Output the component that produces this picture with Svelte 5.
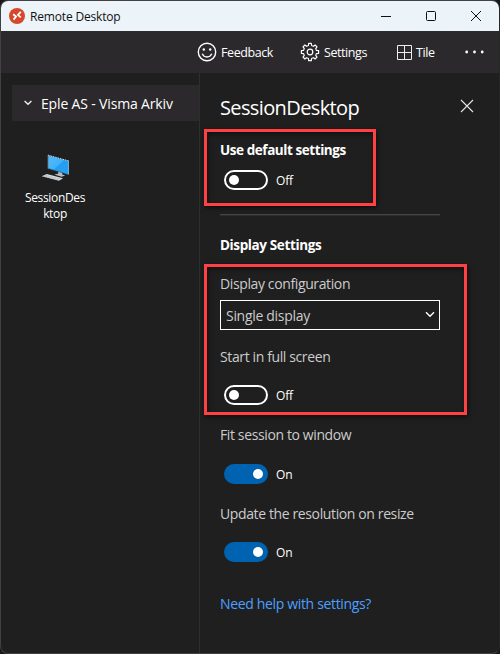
<script>
  let useDefault = $state(false);
  let fullScreen = $state(false);
  let fitWindow = $state(true);
  let updateResolution = $state(true);
  const teeth = Array.from({ length: 8 }, (_, i) => i * 45);
</script>

{#snippet toggle(on, flip)}
  <button class="toggle" class:on role="switch" aria-checked={on} onclick={flip}>
    <span class="track"><span class="knob"></span></span>
    <span class="state">{on ? 'On' : 'Off'}</span>
  </button>
{/snippet}

<div class="desktop">
  <div class="window">
    <header class="titlebar">
      <svg class="logo" width="16" height="16" viewBox="0 0 16 16">
        <circle cx="8" cy="8" r="8" fill="#d6472b" />
        <path d="M4.2 6.3 7 8.6 4.5 11.6M11.8 3.9 8.9 6.9l2.9 2.5" fill="none" stroke="#fff" stroke-width="1.8" />
      </svg>
      <span class="caption">Remote Desktop</span>
      <div class="controls">
        <svg width="12" height="12" viewBox="0 0 12 12"><path d="M1 6.5h10" /></svg>
        <svg width="12" height="12" viewBox="0 0 12 12"><rect x="1.5" y="1.5" width="9" height="9" rx="1" /></svg>
        <svg width="12" height="12" viewBox="0 0 12 12"><path d="m1 1 10 10M11 1 1 11" /></svg>
      </div>
    </header>

    <nav class="toolbar">
      <span class="tool feedback">
        <svg width="20" height="20" viewBox="0 0 20 20">
          <circle cx="10" cy="10" r="8.7" fill="none" stroke="#fff" stroke-width="1.4" />
          <path d="M5.2 11.8q1.5 3.2 4.8 3.2t4.8-3.2" fill="none" stroke="#fff" stroke-width="1.3" />
          <circle cx="6.8" cy="7.5" r="1.2" fill="#fff" /><circle cx="13.2" cy="7.5" r="1.2" fill="#fff" />
        </svg>
        <span>Feedback</span>
      </span>
      <span class="tool settings">
        <svg width="20" height="20" viewBox="0 0 20 20" fill="none" stroke="#fff" stroke-width="1.2" stroke-linejoin="round">
          {#each teeth as angle}
            <path transform="rotate({angle} 10 10)" d="M7.5 3.9 8.4 3.5 8.7 1.4h2.6l.3 2.1.9.4" />
          {/each}
          <circle cx="10" cy="10" r="2.8" />
        </svg>
        <span>Settings</span>
      </span>
      <span class="tool tile">
        <svg width="15" height="15" viewBox="0 0 15 15"><path d="M.5.5h14v14H.5zM7.5 0v15M0 7.5h15" fill="none" stroke="#eee" /></svg>
        <span>Tile</span>
      </span>
      <svg class="more" width="19" height="4" viewBox="0 0 19 4" fill="#fff"><circle cx="1.7" cy="2" r="1.4" /><circle cx="9.5" cy="2" r="1.4" /><circle cx="17.2" cy="2" r="1.4" /></svg>
    </nav>

    <div class="content">
      <aside>
        <div class="group">
          <svg width="8" height="6" viewBox="0 0 8 6"><path d="m.6.9 3.4 3.4L7.4.9" fill="none" stroke="#eee" stroke-width="1.4" /></svg>
          <span>Eple AS - Visma Arkiv</span>
        </div>
        <div class="resource">
          <svg width="29" height="28" viewBox="0 0 29 28">
            <defs><linearGradient id="screen" x2="1" y2="1"><stop stop-color="#52bdff" /><stop offset=".5" stop-color="#42b0f8" /><stop offset=".52" stop-color="#229cf0" /><stop offset="1" stop-color="#2aa4f5" /></linearGradient></defs>
            <path d="M7.5 1.5 27.5 7v13.5l-20-6z" fill="url(#screen)" stroke="#2675a8" stroke-width=".6" />
            <path d="M7 1.2 27.8 7" stroke="#d4e2eb" stroke-dasharray="1.5 1" />
            <path d="M7.2 1v13.6M27.5 7v13.5" stroke="#8bbddb" stroke-width=".8" />
            <path d="m17.2 17.7 4 1.2v1.6l3 1-3.5 1.2-7.5-2.1 4-.8z" fill="#b4bcc2" />
            <path d="m5.8 20.1 16.2 4.2-4 2.5L.7 22.3z" fill="#d9dde0" />
            <path d="m4.5 21.2 15.5 4M2.8 22l15.5 4" stroke="#8d969c" stroke-width=".6" stroke-dasharray="1.2 .8" />
          </svg>
          <span>SessionDes</span>
          <span>ktop</span>
        </div>
      </aside>

      <section class="panel">
        <div class="heading">
          <h1>SessionDesktop</h1>
          <svg width="14" height="14" viewBox="0 0 14 14"><path d="m1 1 12 12M13 1 1 13" stroke="#e5e5e5" stroke-width="1.1" /></svg>
        </div>
        <div class="marked default">
          <h2>Use default settings</h2>
          {@render toggle(useDefault, () => (useDefault = !useDefault))}
        </div>
        <hr />
        <h2 class="section-title">Display Settings</h2>
        <div class="marked display">
          <p class="config">Display configuration</p>
          <div class="select">
            <span>Single display</span>
            <svg width="10" height="7" viewBox="0 0 10 7"><path d="m1 1.2 4 4 4-4" fill="none" stroke="#fff" stroke-width="1.4" /></svg>
          </div>
          <p class="start">Start in full screen</p>
          {@render toggle(fullScreen, () => (fullScreen = !fullScreen))}
        </div>
        <p class="fit">Fit session to window</p>
        {@render toggle(fitWindow, () => (fitWindow = !fitWindow))}
        <p class="update">Update the resolution on resize</p>
        {@render toggle(updateResolution, () => (updateResolution = !updateResolution))}
        <div class="help">Need help with settings?</div>
      </section>
    </div>
  </div>
</div>

<style>
  .desktop {
    box-sizing: border-box;
    width: 500px;
    height: 654px;
    background: #19171a;
    overflow: hidden;
    font-family: "Open Sans", "Noto Sans", sans-serif;
    color: #fff;
  }
  .desktop * { box-sizing: border-box; }
  .window {
    width: 500px;
    height: 654px;
    border: 1px solid #414043;
    border-right-color: #262527;
    border-radius: 8px;
    overflow: hidden;
    background: #1f1f1f;
    display: flex;
    flex-direction: column;
  }
  svg { display: block; flex: none; }
  span, h1, h2, p { white-space: nowrap; }
  .titlebar {
    height: 30px;
    flex: none;
    display: flex;
    align-items: center;
    padding-left: 8px;
    background: #edf4f9;
    color: #111;
  }
  .caption { margin-left: 5px; font-size: 12px; letter-spacing: -0.17px; }
  .controls { display: flex; gap: 33px; margin-left: auto; padding-right: 17px; }
  .controls svg { fill: none; stroke: #111; }
  .toolbar {
    height: 42px;
    flex: none;
    display: flex;
    align-items: center;
    padding-left: 196px;
    background: #2b292c;
    font-size: 12.5px;
    letter-spacing: -0.42px;
  }
  .tool { display: flex; align-items: center; gap: 4px; }
  .feedback { width: 103px; }
  .settings { width: 96px; }
  .tile { width: 69px; gap: 5px; }
  .tile svg { margin-left: 1px; }
  .tile span { margin-left: -1px; }
  .content { flex: 1; display: flex; }
  aside { width: 199px; padding: 12px 0 0 11px; border-right: 1px solid #2e2e2e; }
  .group {
    height: 36px;
    display: flex;
    align-items: center;
    gap: 9px;
    padding-left: 12px;
    background: #2b292c;
    font-size: 14px;
    letter-spacing: -0.16px;
  }
  .resource {
    width: 86px;
    margin-top: 33px;
    display: flex;
    flex-direction: column;
    align-items: center;
    font-size: 12px;
    line-height: 16px;
    letter-spacing: -0.35px;
  }
  .resource svg { margin-bottom: 8px; }
  .panel { flex: 1; padding-left: 20px; }
  .heading { height: 56px; padding: 12px 25px 0 0; display: flex; justify-content: space-between; }
  .heading svg { margin-top: 14px; }
  h1 { margin: 1px 0 -1px; font-size: 20px; line-height: 44px; font-weight: 400; letter-spacing: -0.62px; }
  h2 { margin: 0; font-size: 13.5px; line-height: 20px; font-weight: 700; letter-spacing: -0.43px; }
  p { margin: 0; font-size: 14px; line-height: 20px; letter-spacing: -0.38px; color: #ccc; }
  .marked {
    margin-left: -16px;
    padding-left: 13px;
    border: 3px solid #ff4143;
    box-shadow: 1px 2px 5px #0009, inset 1px 2px 5px #0008;
  }
  .default { width: 172px; height: 77px; padding-top: 8px; }
  .default h2 { margin-bottom: 10px; }
  hr { width: 220px; height: 2px; margin: 8px 0 19px; border: 0; background: linear-gradient(#454545 50%, #2d2d2d 50%); }
  .section-title { margin-bottom: 9px; letter-spacing: -0.38px; }
  .display { width: 263px; height: 151px; padding-top: 7px; }
  .select {
    width: 220px;
    height: 30px;
    margin: 6px 0 17px;
    padding: 0 4px 0 5px;
    border: 1px solid #fff;
    display: flex;
    align-items: center;
    justify-content: space-between;
    font-size: 14px;
    letter-spacing: -0.3px;
    color: #ccc;
  }
  .select svg { margin-top: -2px; }
  .start { margin-bottom: 18px; }
  .toggle {
    display: flex;
    align-items: center;
    gap: 8px;
    height: 20px;
    margin: 0 0 0 4px;
    padding: 0;
    border: 0;
    background: none;
    color: #fff;
    font: 12px "Open Sans", "Noto Sans", sans-serif;
    letter-spacing: -0.2px;
  }
  .track { width: 44px; height: 20px; padding: 3px; display: flex; border: 2px solid #fff; border-radius: 10px; }
  .knob { width: 10px; height: 10px; border-radius: 50%; background: #fff; }
  .on .track { justify-content: flex-end; border-color: #0063b1; background: #0063b1; }
  .fit { margin: 10px 0 19px; }
  .update { margin: 20px 0 18px; }
  .help { margin-top: 32px; font-size: 14px; line-height: 20px; letter-spacing: -0.34px; color: #4ca0ff; }
</style>
